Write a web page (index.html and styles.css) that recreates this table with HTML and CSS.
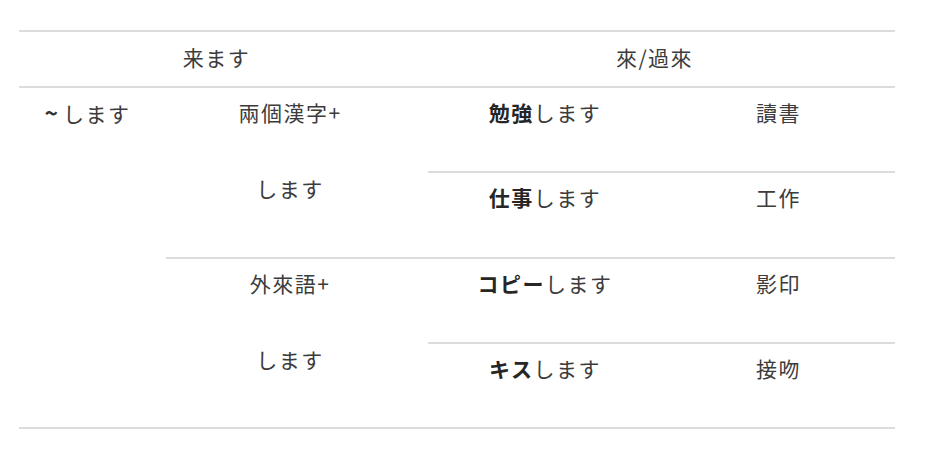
FILE: index.html
```html
<!DOCTYPE html>
<html lang="ja">
<head>
<meta charset="utf-8">
<link rel="stylesheet" href="styles.css">
</head>
<body>
<table class="grid">
  <colgroup>
    <col class="w1">
    <col class="w2">
    <col class="w3">
    <col class="w4">
  </colgroup>
  <thead>
    <tr class="head">
      <th colspan="2">来ます</th>
      <th colspan="2">來/過來</th>
    </tr>
  </thead>
  <tbody>
    <tr>
      <td rowspan="4"><b class="tilde">~</b>します</td>
      <td rowspan="2"><span class="line">兩個漢字+</span><span class="line second">します</span></td>
      <td><b>勉強</b>します</td>
      <td>讀書</td>
    </tr>
    <tr>
      <td><b>仕事</b>します</td>
      <td>工作</td>
    </tr>
    <tr>
      <td rowspan="2"><span class="line">外來語+</span><span class="line second">します</span></td>
      <td><b>コピー</b>します</td>
      <td>影印</td>
    </tr>
    <tr>
      <td><b>キス</b>します</td>
      <td>接吻</td>
    </tr>
  </tbody>
</table>
</body>
</html>
```

FILE: styles.css
```css
html, body {
  margin: 0;
  padding: 0;
  background: #fff;
}

body {
  padding: 30px 0 0 19px;
  font-family: "Noto Sans CJK JP", "Noto Sans CJK TC", sans-serif;
  font-size: 21px;
  letter-spacing: 1.5px;
  color: #3c3c3c;
}

.grid {
  border-collapse: collapse;
  border-spacing: 0;
  width: 876px;
  table-layout: fixed;
}

.w1 { width: 147px; }
.w2 { width: 262px; }
.w3 { width: 248px; }
.w4 { width: 219px; }

.grid th,
.grid td {
  padding: 0 14px 0 0;
  text-align: center;
  font-weight: 400;
  line-height: 31px;
  border-bottom: 2px solid #dcdcdc;
}

.grid thead th {
  border-top: 2px solid #dcdcdc;
  height: 51px;
  padding-bottom: 3px;
  vertical-align: middle;
}

.grid tbody td {
  vertical-align: top;
  padding-top: 9px;
  height: 74.25px;
}

.grid b {
  font-weight: 700;
  color: #262626;
}

.grid .tilde {
  font-size: 23px;
  letter-spacing: 5px;
  padding-left: 4px;
  color: #333;
}

.line {
  display: block;
}

.line.second {
  margin-top: 45px;
}
```
